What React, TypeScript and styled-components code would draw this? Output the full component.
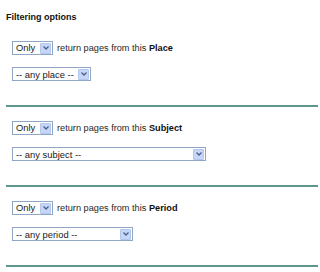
import React from 'react';
import styled, { createGlobalStyle } from 'styled-components';

const GlobalStyle = createGlobalStyle`
  html, body {
    margin: 0;
    padding: 0;
    background: #ffffff;
  }
  body {
    font-family: "Liberation Sans", Arial, sans-serif;
    color: #1e1e1e;
  }
`;

const Panel = styled.div`
  width: 320px;
  height: 272px;
  overflow: hidden;
  padding: 11px 2px 0 6px;
  box-sizing: border-box;
`;

const Title = styled.div`
  font-size: 9px;
  font-weight: bold;
  line-height: 12px;
  color: #111;
  margin-bottom: 4px;
`;

const Section = styled.div`
  display: flex;
  flex-direction: column;
  align-items: flex-start;
  gap: 12px;
  padding: 14px 0 24px 6px;
  border-bottom: 2px solid #5e968f;
`;

const Row = styled.div`
  display: flex;
  align-items: center;
  gap: 4px;
  font-size: 9.2px;
  line-height: 14px;
  color: #262626;
`;

const Strong = styled.b`
  color: #111;
`;

const SelectBox = styled.div<{ $width: number }>`
  display: flex;
  align-items: center;
  justify-content: space-between;
  width: ${p => p.$width}px;
  height: 14px;
  box-sizing: border-box;
  border: 1px solid #8fa6c4;
  background: #fff;
  padding: 0 1px 0 3px;
  font-size: 9.4px;
  color: #202020;
  white-space: nowrap;
`;

const ArrowButton = styled.span`
  display: flex;
  align-items: center;
  justify-content: center;
  width: 11px;
  height: 11px;
  box-sizing: border-box;
  background: #c6d6f7;
  border: 1px solid #b3c6ee;
  border-radius: 1px;
`;

const Chevron = () => (
  <svg width="6" height="4" viewBox="0 0 6 4">
    <path d="M0.5 0.5 L3 3 L5.5 0.5" fill="none" stroke="#4a5f8c" strokeWidth="1.3" />
  </svg>
);

const Select: React.FC<{ value: string; width: number }> = ({ value, width }) => (
  <SelectBox $width={width}>
    <span>{value}</span>
    <ArrowButton>
      <Chevron />
    </ArrowButton>
  </SelectBox>
);

const filters = [
  { name: 'Place', any: '-- any place --', width: 79 },
  { name: 'Subject', any: '-- any subject --', width: 194 },
  { name: 'Period', any: '-- any period --', width: 121 },
];

export default function App() {
  return (
    <>
      <GlobalStyle />
      <Panel>
        <Title>Filtering options</Title>
        {filters.map(f => (
          <Section key={f.name}>
            <Row>
              <Select value="Only" width={41} />
              <span>
                return pages from this <Strong>{f.name}</Strong>
              </span>
            </Row>
            <Select value={f.any} width={f.width} />
          </Section>
        ))}
      </Panel>
    </>
  );
}
